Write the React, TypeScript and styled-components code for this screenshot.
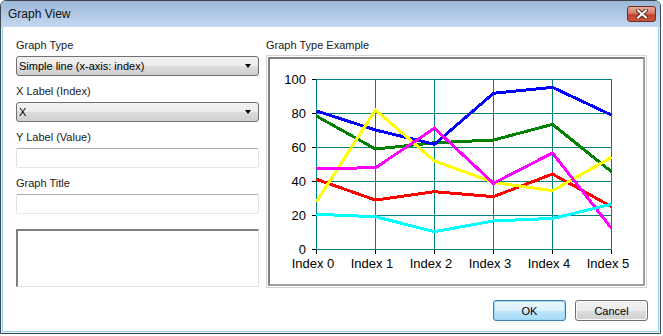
import React from 'react';
import styled, { createGlobalStyle } from 'styled-components';

const GlobalStyle = createGlobalStyle`
  html, body {
    margin: 0;
    padding: 0;
    background: #ffffff;
  }
  body {
    font-family: "Liberation Sans", Arial, sans-serif;
    font-size: 11px;
    color: #000;
  }
`;

const Window = styled.div`
  width: 661px;
  height: 334px;
  box-sizing: border-box;
  border: 1px solid #3e4652;
  border-radius: 6px 6px 0 0;
  overflow: hidden;
  display: flex;
  flex-direction: column;
  background: #eef3f9;
`;

const TitleBar = styled.div`
  height: 26px;
  flex: none;
  display: flex;
  align-items: flex-start;
  justify-content: space-between;
  background: linear-gradient(#9cb7d9, #b3cbe7 60%, #c5d9ef);
  padding-left: 7px;
`;

const Title = styled.span`
  font-size: 12px;
  line-height: 26px;
  color: #111;
`;

const CloseButton = styled.div`
  width: 29px;
  height: 16px;
  box-sizing: border-box;
  margin: 5px 4px 0 0;
  border: 1px solid #6e2b20;
  border-radius: 3px;
  background: linear-gradient(#e9ab9c, #d77a66 45%, #c4452d 55%, #c8553c);
  display: flex;
  align-items: center;
  justify-content: center;
`;

const Frame = styled.div`
  flex: 1;
  display: flex;
  padding: 0 1px 1px;
`;

const Body = styled.div`
  flex: 1;
  background: #fff;
  border: 1px solid #8ed2ef;
  border-top: none;
  padding: 10px 10px 0 13px;
  display: flex;
  flex-direction: column;
`;

const Columns = styled.div`
  display: flex;
  gap: 7px;
`;

const LeftColumn = styled.div`
  width: 243px;
  display: flex;
  flex-direction: column;
  gap: 7px;
`;

const RightColumn = styled.div`
  width: 381px;
  display: flex;
  flex-direction: column;
`;

const Field = styled.div`
  display: flex;
  flex-direction: column;
`;

const Label = styled.div<{ tight?: boolean }>`
  height: 16px;
  line-height: 16px;
  color: #1a1a1a;
  margin-bottom: ${(p) => (p.tight ? 2 : 3)}px;
`;

const Combo = styled.div`
  height: 20px;
  box-sizing: border-box;
  border: 1px solid #707070;
  border-radius: 3px;
  background: linear-gradient(#f2f2f2, #ebebeb 50%, #dddddd 50%, #cfcfcf);
  display: flex;
  align-items: center;
  justify-content: space-between;
  padding: 0 7px 0 2px;
`;

const ComboArrow = styled.span`
  width: 0;
  height: 0;
  border-left: 3.5px solid transparent;
  border-right: 3.5px solid transparent;
  border-top: 4px solid #000;
`;

const TextInput = styled.div`
  height: 20px;
  box-sizing: border-box;
  border: 1px solid #e2e3ea;
  border-top-color: #abadb3;
  border-bottom-color: #e3e9ef;
  border-radius: 2px;
  background: #fff;
`;

const SunkenBox = styled.div`
  margin-top: 8px;
  height: 58px;
  box-sizing: border-box;
  border-style: solid;
  border-width: 2px 1px 1px 2px;
  border-color: #808080 #e3e3e3 #e3e3e3 #808080;
  background: #fff;
`;

const ChartFrame = styled.div`
  height: 233px;
  box-sizing: border-box;
  border: 1px solid #d5d5d5;
  padding: 1px;
`;

const ChartInner = styled.div`
  height: 100%;
  box-sizing: border-box;
  border: 2px solid;
  border-color: #808080 #a0a0a0 #a0a0a0 #808080;
  background: #fff;
`;

const ButtonRow = styled.div`
  margin-top: 12px;
  display: flex;
  justify-content: flex-end;
  gap: 9px;
`;

const Button = styled.div<{ primary?: boolean }>`
  width: 73px;
  height: 21px;
  box-sizing: border-box;
  border: 1px solid ${(p) => (p.primary ? '#3c7fb1' : '#707070')};
  border-radius: 3px;
  background: ${(p) =>
    p.primary
      ? 'linear-gradient(#eaf6fd, #d9f0fc 50%, #bee6fd 50%, #a7d9f5)'
      : 'linear-gradient(#f2f2f2, #ebebeb 50%, #dddddd 50%, #cfcfcf)'};
  box-shadow: ${(p) => (p.primary ? 'inset 0 0 0 1px #9ed6f5' : 'inset 0 0 0 1px #fafafa')};
  display: flex;
  align-items: center;
  justify-content: center;
  color: #000;
`;

const series = [
  { color: '#ff0000', values: [41, 28.8, 33.7, 30.8, 44.1, 24.9] },
  { color: '#008000', values: [78.2, 58.8, 62.5, 64.1, 73.3, 45.5] },
  { color: '#0000ff', values: [81.2, 70, 61.6, 91.6, 95.1, 78.8] },
  { color: '#ffff00', values: [27.8, 81.8, 51.8, 39.2, 34.3, 53.9] },
  { color: '#ff00ff', values: [47.3, 47.8, 71, 38.6, 56.5, 12.2] },
  { color: '#00ffff', values: [20.4, 19, 10.2, 16.5, 18, 26.3] },
];

// plot geometry inside the chart box
const X0 = 46;
const XSTEP = 58.9;
const Y0 = 190;
const YSCALE = 1.7;
const px = (i: number) => Math.round(X0 + i * XSTEP);
const py = (v: number) => Y0 - v * YSCALE;

function LineChart() {
  const ticks = [0, 20, 40, 60, 80, 100];
  const idx = [0, 1, 2, 3, 4, 5];
  return (
    <svg width="373" height="225" style={{ display: 'block' }}>
      <g stroke="#008080" strokeWidth="1" shapeRendering="crispEdges">
        {ticks.map((t) => (
          <line key={t} x1={X0} x2={px(5) + 0.5} y1={py(t) + 0.5} y2={py(t) + 0.5} />
        ))}
        {idx.map((i) => (
          <line key={i} x1={px(i) + 0.5} x2={px(i) + 0.5} y1={py(100)} y2={Y0 + 1} />
        ))}
      </g>
      <g stroke="#000" strokeWidth="1" shapeRendering="crispEdges">
        {ticks.map((t) => (
          <line key={t} x1={X0 - 4} x2={X0} y1={py(t) + 0.5} y2={py(t) + 0.5} />
        ))}
        {idx.map((i) => (
          <line key={i} x1={px(i) + 0.5} x2={px(i) + 0.5} y1={Y0 + 1} y2={Y0 + 5} />
        ))}
      </g>
      <g fontFamily='"Liberation Sans", Arial, sans-serif' fontSize="13" fill="#000">
        {ticks.map((t) => (
          <text key={t} x={36} y={py(t) + 4.5} textAnchor="end">
            {t}
          </text>
        ))}
        {idx.map((i) => (
          <text key={i} x={px(i) - 3} y={209} textAnchor="middle">
            Index {i}
          </text>
        ))}
      </g>
      {series.map((s) => (
        <polyline
          key={s.color}
          points={s.values.map((v, i) => `${px(i) + 0.5},${py(v)}`).join(' ')}
          fill="none"
          stroke={s.color}
          strokeWidth="3"
          shapeRendering="crispEdges"
        />
      ))}
    </svg>
  );
}

export default function App() {
  return (
    <>
      <GlobalStyle />
      <Window>
        <TitleBar>
          <Title>Graph View</Title>
          <CloseButton>
            <svg width="12" height="10" viewBox="0 0 12 10">
              <path d="M2 1.5 L10 8.5 M10 1.5 L2 8.5" stroke="#5a2a22" strokeWidth="4" strokeLinecap="square" />
              <path d="M2 1.5 L10 8.5 M10 1.5 L2 8.5" stroke="#fff" strokeWidth="2" strokeLinecap="square" />
            </svg>
          </CloseButton>
        </TitleBar>
        <Frame>
          <Body>
            <Columns>
              <LeftColumn>
                <Field>
                  <Label>Graph Type</Label>
                  <Combo>
                    <span>Simple line (x-axis: index)</span>
                    <ComboArrow />
                  </Combo>
                </Field>
                <Field>
                  <Label>X Label (Index)</Label>
                  <Combo>
                    <span>X</span>
                    <ComboArrow />
                  </Combo>
                </Field>
                <Field>
                  <Label>Y Label (Value)</Label>
                  <TextInput />
                </Field>
                <Field>
                  <Label>Graph Title</Label>
                  <TextInput />
                </Field>
                <SunkenBox />
              </LeftColumn>
              <RightColumn>
                <Label tight>Graph Type Example</Label>
                <ChartFrame>
                  <ChartInner>
                    <LineChart />
                  </ChartInner>
                </ChartFrame>
              </RightColumn>
            </Columns>
            <ButtonRow>
              <Button primary>OK</Button>
              <Button>Cancel</Button>
            </ButtonRow>
          </Body>
        </Frame>
      </Window>
    </>
  );
}
